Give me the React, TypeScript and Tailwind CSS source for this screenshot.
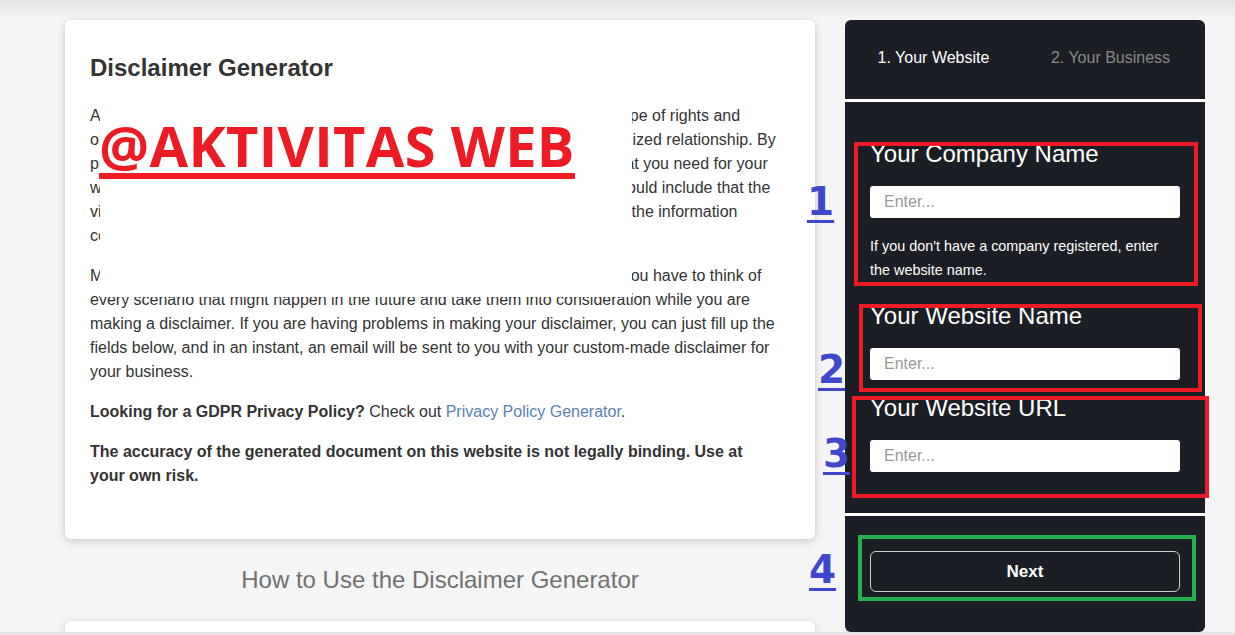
import React from "react";

const FieldLabel: React.FC<{ children: React.ReactNode }> = ({ children }) => (
  <div className="text-[24px] leading-[28px] text-white mb-[18px]">{children}</div>
);

const EnterInput: React.FC = () => (
  <input
    type="text"
    placeholder="Enter..."
    className="block w-full h-8 rounded-[3px] bg-white px-[14px] text-[16px] text-[#333] placeholder:text-[#9a9a9a] outline-none"
  />
);

const App: React.FC = () => {
  return (
    <div className="relative h-[635px] overflow-hidden flex flex-col bg-[linear-gradient(to_bottom,#e4e4e4,#f5f5f5_18px)] font-['Liberation_Sans',Arial,sans-serif] text-[#333]">
      <div className="flex-1 flex gap-[30px] pl-[65px] pt-5 min-h-0">
        {/* left column */}
        <div className="w-[750px] shrink-0">
          <div className="bg-white rounded-md shadow-[0_2px_8px_rgba(0,0,0,0.18)] pl-[25px] pr-[36px] pt-[33px] pb-[35px]">
            <h2 className="text-[24px] leading-[29px] font-bold text-[#333]">Disclaimer Generator</h2>
            <div className="mt-[22px] text-[16px] leading-6">
              <p className="mb-4">
                A disclaimer is generally any statement intended to specify or delimit the scope of rights and
                <br />
                obligations that may be exercised and enforced by parties in a legally recognized relationship. By
                <br />
                putting a disclaimer on your website, you will then get the legal protection that you need for your
                <br />
                website and business. For example, a correct disclaimer for your website should include that the
                <br />
                visitors of your website are the only people responsible for how they will use the information
                <br />
                contained on your website.
              </p>
              <p className="mb-4">
                Making a disclaimer for your website is not as easy as you might think it is. You have to think of
                <br />
                every scenario that might happen in the future and take them into consideration while you are
                making a disclaimer. If you are having problems in making your disclaimer, you can just fill up the
                fields below, and in an instant, an email will be sent to you with your custom-made disclaimer for
                your business.
              </p>
              <p className="mb-4">
                <b>Looking for a GDPR Privacy Policy?</b> Check out{" "}
                <a href="#" className="text-[#5b80b4]">
                  Privacy Policy Generator
                </a>
                .
              </p>
              <p className="mb-4 font-bold">
                The accuracy of the generated document on this website is not legally binding. Use at your own
                risk.
              </p>
            </div>
          </div>
          <h3 className="mt-[27px] mb-[27px] text-center text-[24px] leading-[28px] text-[#717171]">
            How to Use the Disclaimer Generator
          </h3>
          <div className="h-[40px] bg-white rounded-t-md shadow-[0_2px_8px_rgba(0,0,0,0.18)]" />
        </div>

        {/* right panel */}
        <div className="w-[360px] shrink-0 h-[612px] flex flex-col">
          <div className="h-[82px] shrink-0 bg-[#1c1e25] rounded-t-md border-b-[3px] border-white grid grid-cols-2 items-center pr-[6px] pb-1 text-[16px]">
            <div className="text-center text-white">1. Your Website</div>
            <div className="text-center text-[#8a8a8a]">2. Your Business</div>
          </div>
          <div className="h-[414px] shrink-0 bg-[#1c1e25] border-b-[3px] border-white px-[25px] pt-[38px]">
            <div>
              <FieldLabel>Your Company Name</FieldLabel>
              <EnterInput />
              <p className="mt-4 pr-5 text-[14.4px] leading-6 text-white">
                If you don't have a company registered, enter the website name.
              </p>
            </div>
            <div className="mt-5">
              <FieldLabel>Your Website Name</FieldLabel>
              <EnterInput />
            </div>
            <div className="mt-[14px]">
              <FieldLabel>Your Website URL</FieldLabel>
              <EnterInput />
            </div>
          </div>
          <div className="flex-1 bg-[#1c1e25] rounded-b-md px-[25px] pt-[35px]">
            <button className="w-full h-[41px] rounded-md border border-[#d0d0d0] text-white text-[17px] font-bold">
              Next
            </button>
          </div>
        </div>
      </div>
      <div className="h-[3px] shrink-0 bg-[#e6e6e6]" />

      {/* annotation overlays */}
      <div className="absolute left-[100px] top-[104px] w-[532px] h-[193px] bg-white" />
      <div className="absolute left-[99px] top-[117px] inline-block border-b-[6px] border-[#ed1c24] font-['Open_Sans',sans-serif] font-bold text-[56px] leading-[56px] tracking-[0.3px] text-[#ed1c24] whitespace-nowrap">
        @AKTIVITAS WEB
      </div>

      <div className="absolute left-[854px] top-[142px] w-[344px] h-[144px] border-[4px] border-[#ed1c24]" />
      <div className="absolute left-[859px] top-[304px] w-[343px] h-[88px] border-[4px] border-[#ed1c24]" />
      <div className="absolute left-[852px] top-[396px] w-[357px] h-[102px] border-[4px] border-[#ed1c24]" />
      <div className="absolute left-[858px] top-[535px] w-[338px] h-[66px] border-[4px] border-[#22b14c]" />

      <div className="absolute left-[807px] top-[182px] font-['DejaVu_Sans',sans-serif] font-bold text-[39px] leading-[39px] text-[#3f48cc] underline decoration-[3px] underline-offset-[5px]">
        1
      </div>
      <div className="absolute left-[818px] top-[350px] font-['DejaVu_Sans',sans-serif] font-bold text-[39px] leading-[39px] text-[#3f48cc] underline decoration-[3px] underline-offset-[5px]">
        2
      </div>
      <div className="absolute left-[823px] top-[434px] font-['DejaVu_Sans',sans-serif] font-bold text-[39px] leading-[39px] text-[#3f48cc] underline decoration-[3px] underline-offset-[5px]">
        3
      </div>
      <div className="absolute left-[809px] top-[550px] font-['DejaVu_Sans',sans-serif] font-bold text-[39px] leading-[39px] text-[#3f48cc] underline decoration-[3px] underline-offset-[5px]">
        4
      </div>
    </div>
  );
};

export default App;
